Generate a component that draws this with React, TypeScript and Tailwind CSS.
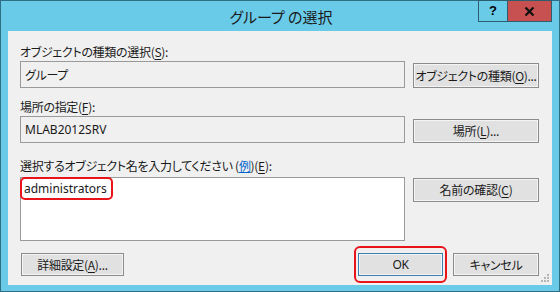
import React from 'react';

const font = "[font-family:'Noto_Sans_CJK_JP','Noto_Sans',sans-serif] [font-feature-settings:'palt']";

// access-key underline, e.g. (S)
const Key = ({ k }: { k: string }) => (
  <>
    (<span className="underline underline-offset-2">{k}</span>)
  </>
);

const Btn = ({ children, def = false, className = '' }: { children: React.ReactNode; def?: boolean; className?: string }) => (
  <div
    className={`flex items-center justify-center border ${def ? 'border-[#3c7fb1]' : 'border-[#8c8c8c]'} bg-[#e1e1e1] text-[12px] text-[#1a1a1a] shadow-[inset_0_0_0_1px_#f4f4f4] ${className}`}
  >
    <span className="whitespace-nowrap tracking-[-0.3px]">{children}</span>
  </div>
);

export default function App() {
  return (
    <div className={`w-[560px] h-[292px] bg-[#6acbe9] border border-[#2f6f86] flex flex-col ${font}`}>
      {/* Title bar */}
      <div className="relative h-[30px] shrink-0 flex items-center justify-center">
        <span className="text-[15px] text-[#1a1a1a] pt-[2px] pl-[2px]">グループ の選択</span>
        <div className="absolute right-[7px] -top-px flex">
          <div className="w-[30px] h-[22px] border border-[#2d5e70] flex items-center justify-center text-[13px] font-bold text-black [font-family:'Liberation_Sans',sans-serif]">
            ?
          </div>
          <div className="w-[44px] h-[22px] border border-l-0 border-[#2d5e70] bg-[#c75050] flex items-center justify-center">
            <svg width="11" height="9" viewBox="0 0 11 9">
              <path d="M1.5 0.5 L9.5 8.5 M9.5 0.5 L1.5 8.5" stroke="#111" strokeWidth="2.2" />
            </svg>
          </div>
        </div>
      </div>

      {/* Client area */}
      <div className="relative flex-1 mx-[7px] mb-[6px] bg-[#f0f0f0] pl-[12px] pr-[13px] pt-[13px] text-[12px] text-[#1a1a1a] tracking-[-0.3px]">
        {/* row 1 */}
        <div className="h-[16px] leading-[16px]">
          オブジェクトの種類の選択<Key k="S" />:
        </div>
        <div className="mt-[1px] flex items-end gap-[8px]">
          <div className="w-[385px] h-[27px] border border-[#9a9a9a] bg-[#f0f0f0] flex items-center px-[4px]">グループ</div>
          <Btn className="w-[126px] h-[25px]">
            オブジェクトの種類<Key k="O" />...
          </Btn>
        </div>

        {/* row 2 */}
        <div className="mt-[11px] h-[16px] leading-[16px]">
          場所の指定<Key k="F" />:
        </div>
        <div className="mt-[1px] flex items-end gap-[8px]">
          <div className="w-[385px] h-[27px] border border-[#9a9a9a] bg-[#f0f0f0] flex items-center px-[4px] [font-family:'Noto_Sans','Noto_Sans_CJK_JP',sans-serif] text-[12px] tracking-normal">
            MLAB2012SRV
          </div>
          <Btn className="w-[126px] h-[24px]">
            場所<Key k="L" />...
          </Btn>
        </div>

        {/* row 3 */}
        <div className="mt-[15px] h-[16px] leading-[16px]">
          選択するオブジェクト名を入力してください (<span className="text-[#0066cc] underline">例</span>)<Key k="E" />:
        </div>
        <div className="mt-[3px] flex items-start gap-[8px]">
          <div className="w-[385px] h-[64px] border border-[#9a9a9a] bg-white">
            <span className="inline-block -ml-px -mt-px border-[2px] border-[#e8141a] rounded-[5px] h-[23px] w-[93px] pl-[2px] leading-[19px] tracking-normal [font-family:'Noto_Sans','Noto_Sans_CJK_JP',sans-serif]">
              administrators
            </span>
          </div>
          <Btn className="w-[126px] h-[24px] mt-px">
            名前の確認<Key k="C" />
          </Btn>
        </div>

        {/* bottom buttons */}
        <div className="mt-[12px] flex items-start">
          <Btn className="ml-[1px] w-[103px] h-[23px]">
            詳細設定<Key k="A" />...
          </Btn>
          <div className="relative ml-[234px]">
            <Btn def className="w-[85px] h-[23px] [font-family:'Noto_Sans',sans-serif]">OK</Btn>
            <div className="pointer-events-none absolute -left-[4px] -right-[4px] -top-[7px] -bottom-[7px] border-[2px] border-[#e8141a] rounded-[6px]" />
          </div>
          <Btn className="ml-[10px] w-[86px] h-[23px]">キャンセル</Btn>
        </div>

        {/* size grip */}
        <svg className="absolute right-[2px] bottom-[2px]" width="10" height="10" viewBox="0 0 10 10">
          {[
            [8, 2], [8, 5], [5, 5], [8, 8], [5, 8], [2, 8],
          ].map(([x, y], i) => (
            <rect key={i} x={x - 1} y={y - 1} width="2" height="2" fill="#b5b5b5" />
          ))}
        </svg>
      </div>
    </div>
  );
}
